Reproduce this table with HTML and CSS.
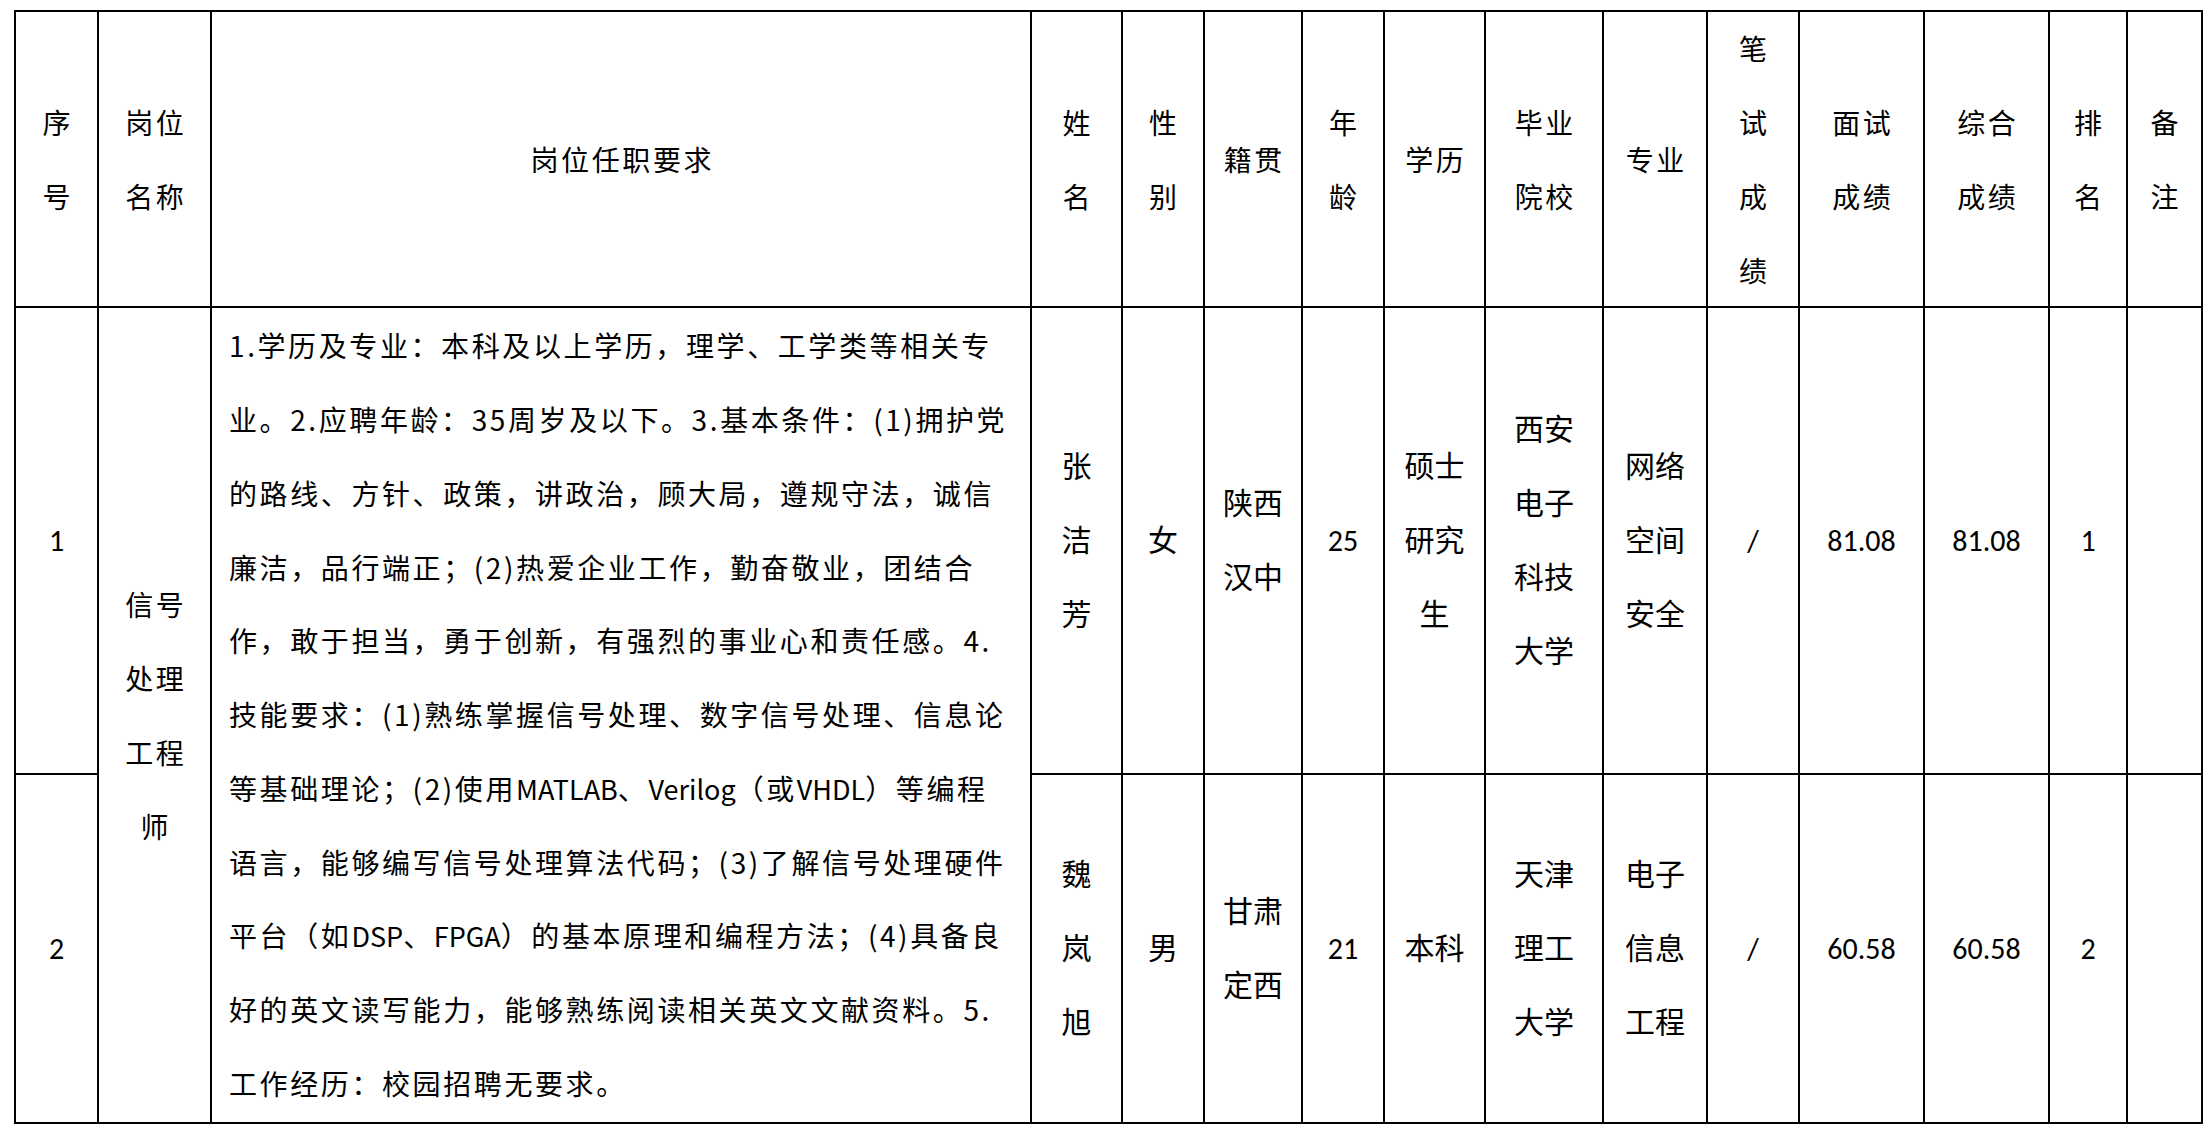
FILE: index.html
```html
<!DOCTYPE html>
<html lang="zh-CN">
<head>
<meta charset="utf-8">
<title>拟录用人员名单</title>
<link rel="stylesheet" href="styles.css">
</head>
<body>
<div class="sheet">
  <div class="cell hd">序<br>号</div>
  <div class="cell hd">岗位<br>名称</div>
  <div class="cell hd">岗位任职要求</div>
  <div class="cell hd">姓<br>名</div>
  <div class="cell hd">性<br>别</div>
  <div class="cell hd">籍贯</div>
  <div class="cell hd">年<br>龄</div>
  <div class="cell hd">学历</div>
  <div class="cell hd">毕业<br>院校</div>
  <div class="cell hd">专业</div>
  <div class="cell hd">笔<br>试<br>成<br>绩</div>
  <div class="cell hd">面试<br>成绩</div>
  <div class="cell hd">综合<br>成绩</div>
  <div class="cell hd">排<br>名</div>
  <div class="cell hd">备<br>注</div>

  <div class="cell dt">1</div>
  <div class="cell hd span2">信号<br>处理<br>工程<br>师</div>
  <div class="cell req span2"><p class="req-text">1.学历及专业：本科及以上学历，理学、工学类等相关专<br>业。2.应聘年龄：35周岁及以下。3.基本条件：(1)拥护党<br>的路线、方针、政策，讲政治，顾大局，遵规守法，诚信<br>廉洁，品行端正；(2)热爱企业工作，勤奋敬业，团结合<br>作，敢于担当，勇于创新，有强烈的事业心和责任感。4.<br>技能要求：(1)熟练掌握信号处理、数字信号处理、信息论<br>等基础理论；(2)使用<span class="lat">MATLAB</span>、<span class="lat">Verilog</span>（或<span class="lat">VHDL</span>）等编程<br>语言，能够编写信号处理算法代码；(3)了解信号处理硬件<br>平台（如<span class="lat">DSP</span>、<span class="lat">FPGA</span>）的基本原理和编程方法；(4)具备良<br>好的英文读写能力，能够熟练阅读相关英文文献资料。5.<br>工作经历：校园招聘无要求。</p></div>
  <div class="cell dt">张<br>洁<br>芳</div>
  <div class="cell dt">女</div>
  <div class="cell dt">陕西<br>汉中</div>
  <div class="cell dt">25</div>
  <div class="cell dt">硕士<br>研究<br>生</div>
  <div class="cell dt">西安<br>电子<br>科技<br>大学</div>
  <div class="cell dt">网络<br>空间<br>安全</div>
  <div class="cell dt">/</div>
  <div class="cell dt">81.08</div>
  <div class="cell dt">81.08</div>
  <div class="cell dt">1</div>
  <div class="cell dt"></div>

  <div class="cell dt">2</div>
  <div class="cell dt">魏<br>岚<br>旭</div>
  <div class="cell dt">男</div>
  <div class="cell dt">甘肃<br>定西</div>
  <div class="cell dt">21</div>
  <div class="cell dt">本科</div>
  <div class="cell dt">天津<br>理工<br>大学</div>
  <div class="cell dt">电子<br>信息<br>工程</div>
  <div class="cell dt">/</div>
  <div class="cell dt">60.58</div>
  <div class="cell dt">60.58</div>
  <div class="cell dt">2</div>
  <div class="cell dt"></div>
</div>
</body>
</html>
```
FILE: styles.css
```css
html, body {
  margin: 0;
  padding: 0;
  background: #ffffff;
}

.sheet {
  display: grid;
  grid-template-columns: 81px 111px 818px 89px 80px 96px 80px 99px 116px 102px 90px 123px 123px 76px 73px;
  grid-template-rows: 294px 465px 347px;
  gap: 2px;
  padding: 2px;
  background: #000000;
  width: max-content;
  margin: 10px 0 0 14px;
}

.cell {
  background: #ffffff;
  color: #000000;
  display: flex;
  align-items: center;
  justify-content: center;
  text-align: center;
  overflow: hidden;
}

.span2 {
  grid-row: span 2;
}

.hd {
  font-family: "Noto Sans CJK SC", sans-serif;
  font-size: 28px;
  letter-spacing: 2.6px;
  line-height: 74px;
  padding-left: 2.6px;
}

.dt {
  font-family: "Carlito", "Lato", "Noto Sans CJK SC", sans-serif;
  font-size: 30px;
  line-height: 74px;
}

.req {
  justify-content: flex-start;
  text-align: left;
  padding-left: 17px;
}

.req-text {
  margin: 0;
  font-family: "Noto Sans CJK SC", sans-serif;
  font-size: 28px;
  letter-spacing: 2.6px;
  line-height: 73.8px;
  white-space: nowrap;
}

.lat {
  letter-spacing: 0;
  font-size: 27px;
}
```
